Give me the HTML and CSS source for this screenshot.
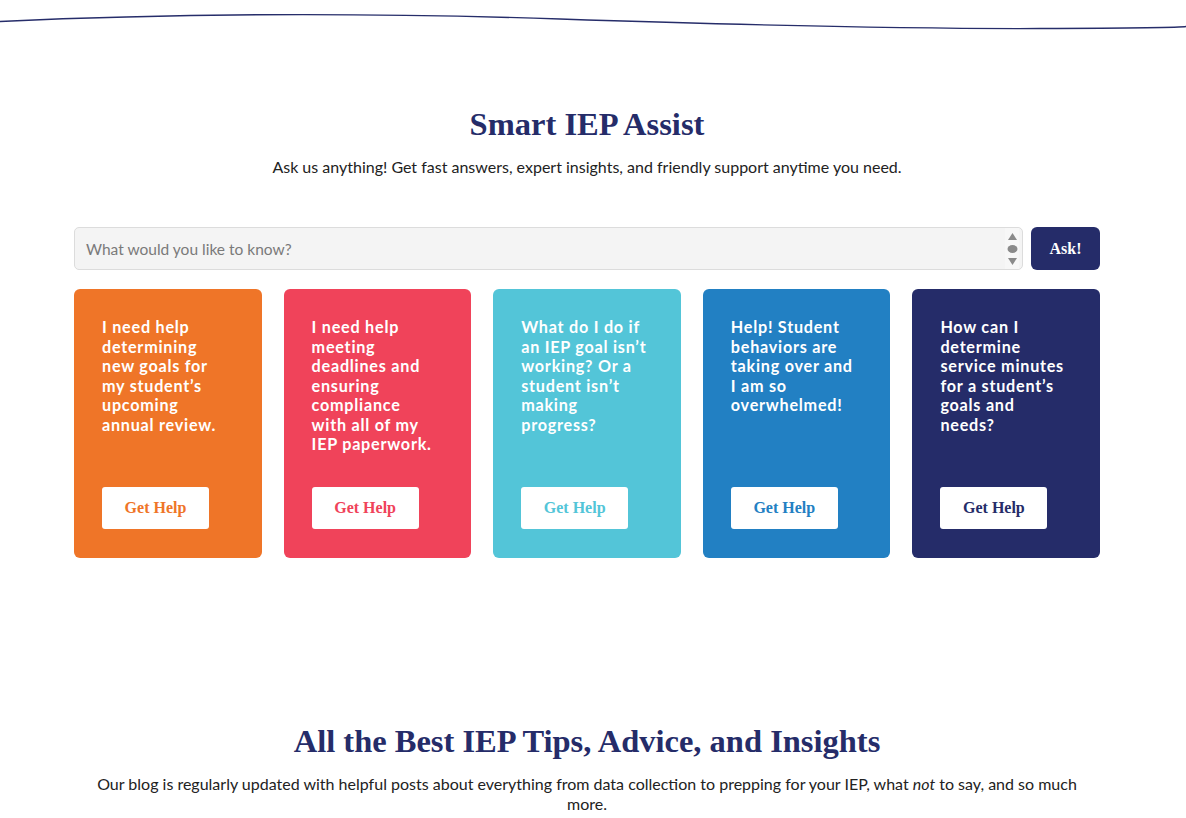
FILE: index.html
```html
<!DOCTYPE html>
<html lang="en">
<head>
<meta charset="utf-8">
<title>Smart IEP Assist</title>
<link rel="stylesheet" href="styles.css">
</head>
<body>
  <div class="wave">
    <svg width="1186" height="40" viewBox="0 0 1186 40" preserveAspectRatio="none">
      <path d="M0 21.5 C 180 13, 380 13, 560 19 S 900 29, 1040 28.5 S 1186 26.5, 1186 26.5" fill="none" stroke="#262d6a" stroke-width="1.3"/>
    </svg>
  </div>

  <main class="page">
    <section class="assist">
      <h1 class="assist-title">Smart IEP Assist</h1>
      <p class="assist-lead">Ask us anything! Get fast answers, expert insights, and friendly support anytime you need.</p>

      <form class="ask-form">
        <div class="ask-field">
          <span class="ask-placeholder">What would you like to know?</span>
          <span class="ask-scroll">
            <svg width="11" height="34" viewBox="0 0 11 34">
              <path d="M5.5 1 L10 8 L1 8 Z" fill="#8a8a8a"/>
              <ellipse cx="5.5" cy="17" rx="5" ry="4" fill="#8a8a8a"/>
              <path d="M1 26 L10 26 L5.5 33 Z" fill="#8a8a8a"/>
            </svg>
          </span>
        </div>
        <button type="button" class="ask-btn">Ask!</button>
      </form>

      <div class="cards">
        <div class="card card-orange">
          <p class="card-text">I need help<br>determining<br>new goals for<br>my student’s<br>upcoming<br>annual review.</p>
          <a class="card-btn">Get Help</a>
        </div>
        <div class="card card-red">
          <p class="card-text">I need help<br>meeting<br>deadlines and<br>ensuring<br>compliance<br>with all of my<br>IEP paperwork.</p>
          <a class="card-btn">Get Help</a>
        </div>
        <div class="card card-teal">
          <p class="card-text">What do I do if<br>an IEP goal isn’t<br>working? Or a<br>student isn’t<br>making<br>progress?</p>
          <a class="card-btn">Get Help</a>
        </div>
        <div class="card card-blue">
          <p class="card-text">Help! Student<br>behaviors are<br>taking over and<br>I am so<br>overwhelmed!</p>
          <a class="card-btn">Get Help</a>
        </div>
        <div class="card card-navy">
          <p class="card-text">How can I<br>determine<br>service minutes<br>for a student’s<br>goals and<br>needs?</p>
          <a class="card-btn">Get Help</a>
        </div>
      </div>
    </section>

    <section class="blog">
      <h2 class="blog-title">All the Best IEP Tips, Advice, and Insights</h2>
      <p class="blog-lead">Our blog is regularly updated with helpful posts about everything from data collection to prepping for your IEP, what <em>not</em> to say, and so much<br>more.</p>
    </section>
  </main>
</body>
</html>
```

FILE: styles.css
```css
html, body {
  margin: 0;
  padding: 0;
  background: #ffffff;
}

body {
  font-family: Lato, "Noto Sans", sans-serif;
  color: #222;
  overflow: hidden;
}

.wave {
  height: 40px;
}

.wave svg {
  display: block;
  width: 100%;
  height: 40px;
}

.page {
  width: 1174px;
}

.assist {
  width: 1026px;
  margin: 0 auto;
  padding-top: 64px;
}

.assist-title {
  margin: 0;
  text-align: center;
  font-family: "Liberation Serif", "DejaVu Serif", serif;
  font-weight: 700;
  font-size: 32.5px;
  line-height: 40px;
  color: #252c69;
}

.assist-lead {
  margin: 13px 0 0;
  text-align: center;
  font-size: 16px;
  line-height: 20px;
  color: #222;
}

.ask-form {
  display: flex;
  gap: 8px;
  margin-top: 50px;
}

.ask-field {
  flex: 1;
  height: 43px;
  box-sizing: border-box;
  display: flex;
  align-items: center;
  justify-content: space-between;
  background: #f4f4f4;
  border: 1px solid #dcdcdc;
  border-radius: 5px;
  padding: 0 3px 0 11px;
}

.ask-placeholder {
  font-size: 15.5px;
  color: #7a7a7a;
}

.ask-scroll {
  display: flex;
  align-items: center;
  justify-content: center;
  width: 14px;
  height: 41px;
  background: #f7f7f7;
}

.ask-scroll svg {
  display: block;
}

.ask-btn {
  width: 69px;
  height: 43px;
  border: none;
  border-radius: 6px;
  background: #252c69;
  color: #fff;
  font-family: "Liberation Serif", "DejaVu Serif", serif;
  font-weight: 700;
  font-size: 16px;
  cursor: pointer;
}

.cards {
  display: grid;
  grid-template-columns: repeat(5, 1fr);
  gap: 22px;
  margin-top: 19px;
}

.card {
  height: 269px;
  box-sizing: border-box;
  border-radius: 6px;
  padding: 28px 16px 29px 28px;
  display: flex;
  flex-direction: column;
  justify-content: space-between;
  align-items: flex-start;
}

.card-text {
  margin: 0;
  font-family: Lato, "Open Sans", sans-serif;
  font-size: 16.2px;
  font-weight: 700;
  letter-spacing: 0.75px;
  line-height: 19.5px;
  white-space: nowrap;
  color: #fff;
}

.card-btn {
  width: 107px;
  height: 42px;
  display: flex;
  align-items: center;
  justify-content: center;
  background: #fff;
  border-radius: 3px;
  font-family: "Liberation Serif", "DejaVu Serif", serif;
  font-weight: 700;
  font-size: 16px;
}

.card-orange { background: #ef7528; }
.card-orange .card-btn { color: #ef7528; }
.card-red { background: #f0435a; }
.card-red .card-btn { color: #f0435a; }
.card-teal { background: #53c5d8; }
.card-teal .card-btn { color: #53c5d8; }
.card-blue { background: #2280c3; }
.card-blue .card-btn { color: #2280c3; }
.card-navy { background: #252c69; }
.card-navy .card-btn { color: #252c69; }

.blog {
  width: 1026px;
  margin: 0 auto;
  padding-top: 163px;
  text-align: center;
}

.blog-title {
  margin: 0;
  font-family: "Liberation Serif", "DejaVu Serif", serif;
  font-weight: 700;
  font-size: 32.5px;
  line-height: 40px;
  color: #252c69;
}

.blog-lead {
  max-width: 1000px;
  margin: 13px auto 0;
  font-size: 16px;
  line-height: 20px;
  color: #222;
}

.blog-lead em {
  font-style: italic;
}
```
